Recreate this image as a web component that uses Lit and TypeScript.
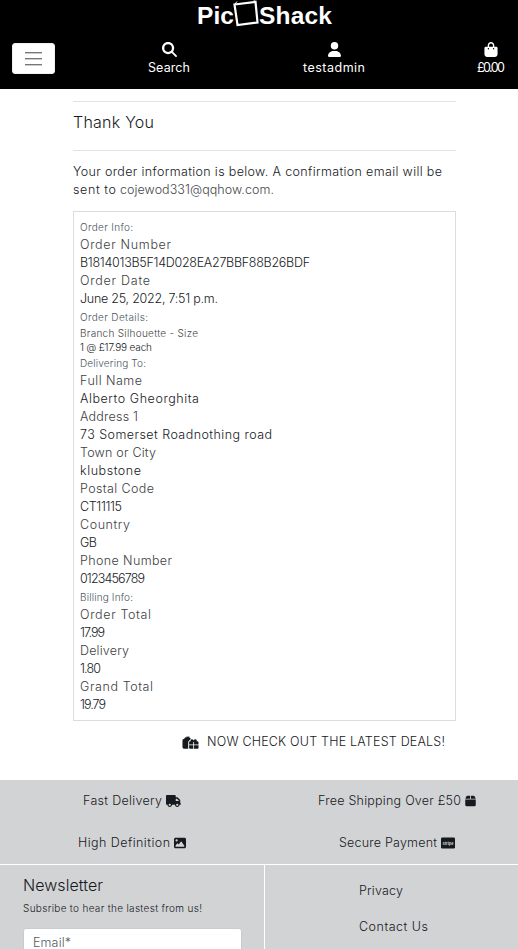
import { LitElement, html, css, svg } from "lit";
import { customElement, property } from "lit/decorators.js";

/** A single line of text, tracked so that it fills a set width. */
@customElement("fit-text")
class FitText extends LitElement {
  @property() text = "";
  @property({ type: Number }) w = 0;
  static styles = css`
    :host { display: inline-block; white-space: nowrap; flex: none; }
    .t { display: inline-block; white-space: pre; }
  `;
  firstUpdated() {
    const t = this.renderRoot.querySelector(".t") as HTMLElement;
    const natural = t.getBoundingClientRect().width;
    const gap = (this.w - natural) / Math.max(1, this.text.length - 1);
    this.style.width = `${this.w}px`;
    t.style.letterSpacing = `${gap}px`;
  }
  render() {
    return html`<span class="t">${this.text}</span>`;
  }
}

const fit = (text: string, w: number) => html`<fit-text .text=${text} .w=${w}></fit-text>`;

const icons = {
  search: svg`<path d="M416 208c0 45.900-14.900 88.300-40 122.700L502.600 457.400c12.500 12.500 12.500 32.800 0 45.300s-32.800 12.500-45.300 0L330.700 376c-34.400 25.200-76.800 40-122.700 40C93.100 416 0 322.900 0 208S93.100 0 208 0S416 93.100 416 208zM208 338a130 130 0 1 0 0-260 130 130 0 1 0 0 260z"/>`,
  user: svg`<path d="M224 256A128 128 0 1 0 224 0a128 128 0 1 0 0 256zm-45.700 48C79.800 304 0 383.800 0 482.300C0 498.700 13.300 512 29.700 512H418.300c16.400 0 29.700-13.300 29.700-29.700C448 383.800 368.200 304 269.700 304H178.300z"/>`,
  bag: svg`<path d="M160 112c0-35.300 28.700-64 64-64s64 28.700 64 64v48H160V112zm-48 48H48c-26.500 0-48 21.500-48 48V416c0 53 43 96 96 96H352c53 0 96-43 96-96V208c0-26.500-21.500-48-48-48H336V112C336 50.100 285.900 0 224 0S112 50.100 112 112v48zm24 48a24 24 0 1 1 0 48 24 24 0 1 1 0-48zm152 24a24 24 0 1 1 48 0 24 24 0 1 1 -48 0z"/>`,
  truck: svg`<path fill-rule="evenodd" d="M368 0C394.500 0 416 21.500 416 48V96H466.700C483.700 96 499.100 102.700 512 114.700L589.300 192C601.300 204 608 220.300 608 237.300V352C625.700 352 640 366.300 640 384S625.700 416 608 416H576C576 469 533 512 480 512S384 469 384 416H256C256 469 213 512 160 512S64 469 64 416H48C21.500 416 0 394.500 0 368V48C0 21.500 21.500 0 48 0H368zM416 160V256H544V237.300L466.700 160H416zM160 368a48 48 0 1 0 0 96 48 48 0 1 0 0-96zM480 368a48 48 0 1 0 0 96 48 48 0 1 0 0-96z"/>`,
  image: svg`<path fill-rule="evenodd" d="M64 32H448C483 32 512 61 512 96V416C512 451 483 480 448 480H64C29 480 0 451 0 416V96C0 61 29 32 64 32zM112 96a48 48 0 1 0 0 96 48 48 0 1 0 0-96zM64 400Q64 416 88 416H424Q452 416 446 386L324 204Q306 180 286 204L204 324L168 280Q150 264 132 280L70 362Q64 372 64 400z"/>`,
  box: svg`<path d="M50 58Q62 32 92 32H206V160H0zM242 32H356Q386 32 398 58L448 160H242zM0 192H448V416Q448 480 384 480H64Q0 480 0 416z"/>`,
  gifts: svg`<path d="M3.500 2.200 4.600 2.400 5 .8 6 1.800 7.400 1 7.700 2.500 8.900 3Q9 4 8 4.800 6.400 5.600 6.400 7.400V14H2Q.5 14 .5 12.500V5.500Q.5 4 2 4zM9.300 4.400Q11 3.600 12 5.400 13 3.600 14.700 4.400 15.600 5.200 15 6.300H15.800Q17 6.300 17 7.500V9.600H12.400V7H11.600V9.600H7.300V7.500Q7.300 6.300 8.500 6.300H9Q8.400 5.200 9.300 4.400zM7.300 10.400H11.600V14H8.500Q7.300 14 7.300 13zM12.400 10.400H17V13Q17 14 16 14H12.400z"/>`,
};

@customElement("app-root")
class AppRoot extends LitElement {
  static styles = css`
    :host {
      display: block; height: 949px; overflow: hidden; background: #fff;
      font: 300 12.5px/18px Inter, "Open Sans", sans-serif; color: #16191d;
    }
    * { box-sizing: border-box; }
    svg { display: block; fill: currentColor; flex: none; }
    header { height: 89px; background: #000; color: #fff; overflow: hidden; }
    .logo { display: flex; align-items: flex-start; height: 42px; padding-left: 197px; font: 700 24.5px/32px "Liberation Sans", sans-serif; }
    .frame { margin: 0 -1px 0 -2px; fill: none; stroke: #fff; }
    .bar { display: grid; grid-template-columns: 72px 194px 136px 1fr; height: 47px; font-weight: 400; }
    .toggle { width: 43px; height: 31px; margin: 1px 0 0 12px; padding: 0 12px; background: #fff; border: 1px solid #f0f0f0; border-radius: 3px;
      display: flex; flex-direction: column; justify-content: center; gap: 5px; }
    .toggle i { height: 1px; background: #777; box-shadow: 0 1px #ccc; }
    .nav { display: flex; flex-direction: column; align-items: center; }
    .nav svg { height: 15px; margin-bottom: 2px; }
    .nav.last { align-items: flex-end; padding-right: 13px; }
    .nav.last svg { margin-right: 7px; }
    main { width: 383px; margin: 12px 0 0 73px; height: 679px; }
    h1 { margin: 0; height: 50px; padding-top: 8px; border: solid #e2e3e4; border-width: 1px 0; font: 300 16px/24px Inter, sans-serif; }
    .intro { margin: 12px 0 12px; display: flex; flex-direction: column; }
    .intro div { display: flex; gap: 4px; }
    .mail { color: #45484b; }
    .card { border: 1px solid #d9dde0; padding: 6px 6px 5px 6px; height: 510px; }
    .row { height: 18px; }
    .label { color: #3d4043; }
    .head { color: #4a545e; font-size: 10px; }
    .small { height: 14px; font-size: 10px; line-height: 14px; }
    .small.label { color: #444; }
    .deals { display: flex; align-items: center; margin: 12px 0 0 109px; }
    .deals svg { margin-right: 8px; }
    footer { height: 169px; background: #d2d3d5; }
    .perks { display: grid; grid-template-columns: 264px 254px; grid-template-rows: 42px 42px; height: 85px; border-bottom: 1px solid #fff; }
    .perks div { display: flex; align-items: center; justify-content: center; gap: 4px; }
    .perks .right { padding-left: 12px; }
    .bottom { display: grid; grid-template-columns: 265px 1fr; height: 84px; }
    .news { border-right: 1px solid #fff; padding: 8px 22px 0 23px; }
    .title { font-size: 16px; line-height: 24px; }
    .sub { font-size: 10px; line-height: 22px; }
    .field { margin-top: 9px; height: 40px; width: 219px; padding: 5px 9px; background: #fff; border: 1px solid #c8ccd0; border-radius: 3px; color: #525b64; }
    .links { padding: 17px 0 0 94px; display: flex; flex-direction: column; gap: 18px; }
    .brand { font: 700 5px "Liberation Sans", sans-serif; fill: #d2d3d5; }
  `;

  private rows: [string, string, number][] = [
    ["head", "Order Info:", 53],
    ["label", "Order Number", 91],
    ["", "B1814013B5F14D028EA27BBF88B26BDF", 230],
    ["label", "Order Date", 70],
    ["", "June 25, 2022, 7:51 p.m.", 138],
    ["head", "Order Details:", 68],
    ["small label", "Branch Silhouette - Size", 118],
    ["small", "1 @ £17.99 each", 72],
    ["head", "Delivering To:", 66],
    ["label", "Full Name", 62],
    ["", "Alberto Gheorghita", 119],
    ["label", "Address 1", 58],
    ["", "73 Somerset Roadnothing road", 192],
    ["label", "Town or City", 76],
    ["", "klubstone", 61],
    ["label", "Postal Code", 74],
    ["", "CT11115", 42],
    ["label", "Country", 50],
    ["", "GB", 17],
    ["label", "Phone Number", 92],
    ["", "0123456789", 65],
    ["head", "Billing Info:", 53],
    ["label", "Order Total", 71],
    ["", "17.99", 25],
    ["label", "Delivery", 49],
    ["", "1.80", 21],
    ["label", "Grand Total", 73],
    ["", "19.79", 26],
  ];

  render() {
    return html`
      <header>
        <div class="logo">
          ${fit("Pic", 37)}
          <svg class="frame" width="28" height="27" viewBox="0 0 28 27">
            <path stroke-width="2.200" d="M2.500 4.500 23.500 1.800 25.500 22.500 5.500 25z" />
            <path stroke-width="1" d="M2.500 4.500 5 1.500M23.500 1.800 21.500 0" />
          </svg>
          ${fit("Shack", 73)}
        </div>
        <div class="bar">
          <div class="toggle"><i></i><i></i><i></i></div>
          <div class="nav"><svg width="15" viewBox="0 0 512 512">${icons.search}</svg>${fit("Search", 42)}</div>
          <div class="nav"><svg width="13" viewBox="0 0 448 512">${icons.user}</svg>${fit("testadmin", 62)}</div>
          <div class="nav last"><svg width="14" viewBox="0 0 448 512">${icons.bag}</svg>${fit("£0.00", 28)}</div>
        </div>
      </header>
      <main>
        <h1>${fit("Thank You", 81)}</h1>
        <div class="intro">
          ${fit("Your order information is below. A confirmation email will be", 369)}
          <div>${fit("sent to", 43)}<span class="mail">${fit("cojewod331@qqhow.com.", 154)}</span></div>
        </div>
        <section class="card">
          ${this.rows.map(([kind, text, w]) => html`<div class="row ${kind}">${fit(text, w)}</div>`)}
        </section>
        <div class="deals">
          <svg width="17" height="15" viewBox="0 0 17.500 15">${icons.gifts}</svg>
          ${fit("NOW CHECK OUT THE LATEST DEALS!", 238)}
        </div>
      </main>
      <footer>
        <div class="perks">
          <div>${fit("Fast Delivery", 79)}<svg width="15" height="12" viewBox="0 0 640 512">${icons.truck}</svg></div>
          <div class="right">${fit("Free Shipping Over £50", 143)}<svg width="11" height="12" viewBox="0 0 448 512">${icons.box}</svg></div>
          <div>${fit("High Definition", 92)}<svg width="12" height="12" viewBox="0 0 512 512">${icons.image}</svg></div>
          <div class="right">${fit("Secure Payment", 98)}<svg width="14" height="12" viewBox="0 0 14 12">
            <rect y=".5" width="14" height="11" rx="1.200" />
            <text class="brand" x="1.500" y="7.500" textLength="11" lengthAdjust="spacingAndGlyphs">stripe</text></svg></div>
        </div>
        <div class="bottom">
          <div class="news">
            <div class="title">${fit("Newsletter", 80)}</div>
            <div class="sub">${fit("Subsribe to hear the lastest from us!", 179)}</div>
            <div class="field">${fit("Email*", 38)}</div>
          </div>
          <div class="links">${fit("Privacy", 44)}${fit("Contact Us", 69)}</div>
        </div>
      </footer>
    `;
  }
}
